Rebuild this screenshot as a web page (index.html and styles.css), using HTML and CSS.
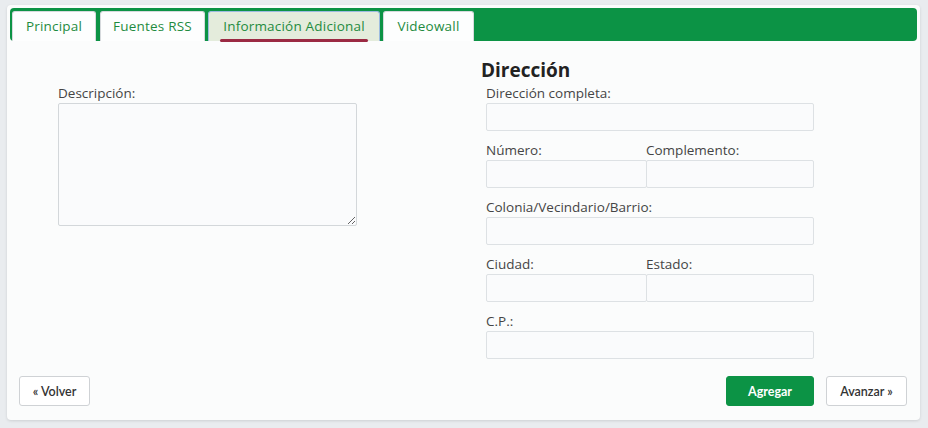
FILE: index.html
```html
<!DOCTYPE html>
<html lang="es">
<head>
<meta charset="utf-8">
<title>Información Adicional</title>
<link rel="stylesheet" href="styles.css">
</head>
<body>
<div class="card">
  <div class="tabbar">
    <div class="tab t1">Principal</div>
    <div class="tab t2">Fuentes RSS</div>
    <div class="tab t3 active">Información Adicional</div>
    <div class="tab t4">Videowall</div>
  </div>
  <div class="content">
    <div class="col-left">
      <label class="lbl">Descripción:</label>
      <textarea class="ta"></textarea>
    </div>
    <div class="col-right">
      <h3 class="heading">Dirección</h3>
      <div class="field">
        <label class="lbl">Dirección completa:</label>
        <input class="inp" type="text">
      </div>
      <div class="field pair">
        <div class="half">
          <label class="lbl">Número:</label>
          <input class="inp" type="text">
        </div>
        <div class="half second">
          <label class="lbl">Complemento:</label>
          <input class="inp" type="text">
        </div>
      </div>
      <div class="field">
        <label class="lbl">Colonia/Vecindario/Barrio:</label>
        <input class="inp" type="text">
      </div>
      <div class="field pair">
        <div class="half">
          <label class="lbl">Ciudad:</label>
          <input class="inp" type="text">
        </div>
        <div class="half second">
          <label class="lbl">Estado:</label>
          <input class="inp" type="text">
        </div>
      </div>
      <div class="field">
        <label class="lbl">C.P.:</label>
        <input class="inp" type="text">
      </div>
    </div>
  </div>
  <div class="footer">
    <button class="btn b-back">« Volver</button>
    <div class="spacer"></div>
    <button class="btn primary">Agregar</button>
    <button class="btn b-next">Avanzar »</button>
  </div>
</div>
</body>
</html>
```
FILE: styles.css
```css
* { box-sizing: border-box; }
html, body { margin: 0; padding: 0; }
body {
  background: #e9ecef;
  font-family: "Open Sans", "Noto Sans", sans-serif;
  color: #444;
  width: 928px;
  height: 428px;
  overflow: hidden;
}
.card {
  margin: 5px 0 0 7px;
  width: 913px;
  height: 415px;
  background: #fbfcfc;
  border-radius: 4px;
  box-shadow: 0 1px 3px rgba(0,0,0,0.12);
  padding: 3px;
  display: flex;
  flex-direction: column;
}
.tabbar {
  flex: none;
  background: #0c9345;
  height: 33px;
  border-radius: 4px;
  padding: 3px 0 0 2px;
  display: flex;
  align-items: stretch;
  gap: 3px;
}
.tab {
  position: relative;
  background: #fdfefe;
  border: 1px solid #d6dadd;
  border-bottom: none;
  border-radius: 3px 3px 0 0;
  color: #1f8b3e;
  font-size: 13.5px;
  font-weight: 500;
  line-height: 29px;
  text-align: center;
  white-space: nowrap;
  letter-spacing: 0.2px;
}
.t1 { width: 84px; margin-right: 1px; }
.t2 { width: 105px; }
.t3 { width: 172px; }
.t4 { width: 91px; }
.tab.active {
  background: #e4ecdc;
  border: 1px solid #9dbbe0;
  border-bottom: none;
}
.tab.active::after {
  content: "";
  position: absolute;
  left: 11px;
  right: 11px;
  bottom: -1px;
  height: 3px;
  border-radius: 2px;
  background: #9b2a43;
}
.content {
  flex: none;
  display: flex;
  padding: 17px 0 0 48px;
  height: 318px;
}
.col-left {
  width: 423px;
  padding-top: 25px;
}
.col-right {
  width: 335px;
}
.heading {
  margin: 0;
  font-size: 19px;
  line-height: 25px;
  font-weight: 700;
  color: #222;
}
.lbl {
  display: block;
  font-size: 13.5px;
  line-height: 20px;
  color: #454545;
  white-space: nowrap;
}
.field {
  margin-left: 5px;
  width: 328px;
  margin-bottom: 9px;
}
.field.pair { display: flex; }
.half { width: 161px; }
.half.second { width: 167px; }
.half.second .lbl { margin-left: -1px; }
.half.second .inp { margin-left: -1px; width: calc(100% + 1px); }
.inp {
  display: block;
  width: 100%;
  height: 28px;
  margin: 0;
  background: #fafbfc;
  border: 1px solid #dde1e4;
  border-radius: 2px;
  font: inherit;
}
.ta {
  display: block;
  width: 299px;
  height: 123px;
  margin: 0;
  background: #fafbfc;
  border: 1px solid #d3d7da;
  border-radius: 2px;
  font: inherit;
}
.footer {
  flex: none;
  display: flex;
  align-items: flex-start;
  margin-top: 17px;
  padding: 0 10px 0 9px;
  gap: 12px;
}
.spacer { flex: 1; }
.btn {
  height: 30px;
  padding: 0;
  background: #fff;
  border: 1px solid #cfd2d5;
  border-radius: 3px;
  font-family: "Lato", "Liberation Sans", sans-serif;
  font-size: 12.5px;
  font-weight: 600;
  color: #333;
}
.b-back { width: 71px; }
.b-next { width: 81px; }
.btn.primary {
  background: #0c9345;
  border-color: #0c9345;
  color: #fff;
  font-weight: 700;
  width: 88px;
}
```
